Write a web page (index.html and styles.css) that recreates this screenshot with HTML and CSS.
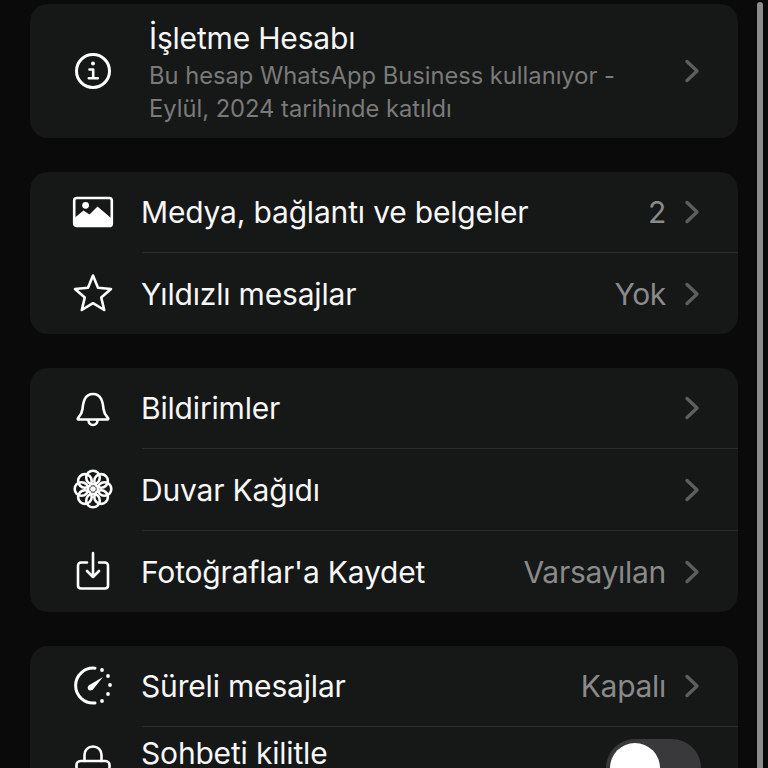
FILE: index.html
```html
<!DOCTYPE html>
<html lang="tr">
<head>
    <meta charset="UTF-8">
    <meta name="viewport" content="width=device-width, initial-scale=1.0">
    <title>Kişi bilgisi</title>
    <link rel="stylesheet" href="styles.css">
</head>
<body>
    <div class="screen">
        <div class="card">
            <div class="row row-info">
                <div class="icon-cell icon-cell-wide">
                    <svg class="icon" viewBox="0 0 40 40"><circle cx="20" cy="20" r="16.500" class="line"/><circle cx="20" cy="12.600" r="2" class="solid"/><path d="M16.500 18.500h3.700v8.500M15.800 27.200h9" class="line thin"/></svg>
                </div>
                <div class="row-body">
                    <div class="info-text">
                        <div class="title">İşletme Hesabı</div>
                        <div class="subtitle">Bu hesap WhatsApp Business kullanıyor -<br>Eylül, 2024 tarihinde katıldı</div>
                    </div>
                    <svg class="chevron" viewBox="0 0 16 24"><path d="M3 2.500l10 9.500-10 9.500"/></svg>
                </div>
            </div>
        </div>

        <div class="card">
            <div class="row">
                <div class="icon-cell">
                    <svg class="icon" viewBox="0 0 40 40"><rect x="1.200" y="6" width="37.600" height="28" rx="2.600" class="line thin"/><path d="M2 32v-6.500l8.500-7 6 4 8-8 13.500 11.500v6l-1.500 1.500h-33z" class="solid"/><circle cx="12.600" cy="13.300" r="3.400" class="solid"/></svg>
                </div>
                <div class="row-body">
                    <div class="title">Medya, bağlantı ve belgeler</div>
                    <div class="value">2</div>
                    <svg class="chevron" viewBox="0 0 16 24"><path d="M3 2.500l10 9.500-10 9.500"/></svg>
                </div>
            </div>
            <div class="row">
                <div class="icon-cell">
                    <svg class="icon" viewBox="0 0 40 40"><path d="M20 2.500l5 12.300 13 1.200-9.800 8.400 3 12.600-11.200-6.800-11.200 6.800 3-12.600-9.800-8.400 13-1.200z" class="line thin"/></svg>
                </div>
                <div class="row-body">
                    <div class="title">Yıldızlı mesajlar</div>
                    <div class="value">Yok</div>
                    <svg class="chevron" viewBox="0 0 16 24"><path d="M3 2.500l10 9.500-10 9.500"/></svg>
                </div>
            </div>
        </div>

        <div class="card">
            <div class="row">
                <div class="icon-cell">
                    <svg class="icon" viewBox="0 0 40 40"><path d="M5.500 31.500c-.8 0-1-.8-.5-1.400 2.300-2.600 4-4.300 4.500-9.100.6-6 1.800-15 10.500-15s9.900 9 10.500 15c.5 4.800 2.200 6.500 4.500 9.100.5.600.3 1.400-.5 1.400z" class="line thin"/><path d="M15.500 32c0 3.200 2 5 4.500 5s4.500-1.800 4.500-5" class="line thin"/></svg>
                </div>
                <div class="row-body">
                    <div class="title">Bildirimler</div>
                    <svg class="chevron" viewBox="0 0 16 24"><path d="M3 2.500l10 9.500-10 9.500"/></svg>
                </div>
            </div>
            <div class="row">
                <div class="icon-cell">
                    <svg class="icon" viewBox="0 0 40 40">
                        <g class="line thin">
                            <circle cx="20" cy="8.500" r="6.800"/><circle cx="28.100" cy="11.900" r="6.800"/><circle cx="31.500" cy="20" r="6.800"/><circle cx="28.100" cy="28.100" r="6.800"/>
                            <circle cx="20" cy="31.500" r="6.800"/><circle cx="11.900" cy="28.100" r="6.800"/><circle cx="8.500" cy="20" r="6.800"/><circle cx="11.900" cy="11.900" r="6.800"/>
                        </g>
                        <circle cx="20" cy="20" r="2.800" class="solid"/>
                    </svg>
                </div>
                <div class="row-body">
                    <div class="title">Duvar Kağıdı</div>
                    <svg class="chevron" viewBox="0 0 16 24"><path d="M3 2.500l10 9.500-10 9.500"/></svg>
                </div>
            </div>
            <div class="row">
                <div class="icon-cell">
                    <svg class="icon" viewBox="0 0 40 40"><path d="M14 11.500h-6c-1.800 0-3 1.200-3 3v20c0 1.800 1.200 3 3 3h24c1.800 0 3-1.200 3-3v-20c0-1.800-1.200-3-3-3h-6" class="line thin"/><path d="M20 2v24M14 20l6 6 6-6" class="line thin"/></svg>
                </div>
                <div class="row-body">
                    <div class="title">Fotoğraflar'a Kaydet</div>
                    <div class="value">Varsayılan</div>
                    <svg class="chevron" viewBox="0 0 16 24"><path d="M3 2.500l10 9.500-10 9.500"/></svg>
                </div>
            </div>
        </div>

        <div class="card">
            <div class="row">
                <div class="icon-cell">
                    <svg class="icon" viewBox="0 0 40 40"><path d="M22 2.200a17.500 17.500 0 1 0 0 34.800" class="line"/><circle cx="29" cy="4" r="1.900" class="solid"/><circle cx="35" cy="10" r="1.900" class="solid"/><circle cx="37" cy="19" r="1.900" class="solid"/><circle cx="35" cy="28" r="1.900" class="solid"/><circle cx="29" cy="35" r="1.900" class="solid"/><path d="M15.500 19.500l14.500-8.500-10.500 13z" class="solid"/><circle cx="17.300" cy="21.800" r="2.600" class="solid"/></svg>
                </div>
                <div class="row-body">
                    <div class="title">Süreli mesajlar</div>
                    <div class="value">Kapalı</div>
                    <svg class="chevron" viewBox="0 0 16 24"><path d="M3 2.500l10 9.500-10 9.500"/></svg>
                </div>
            </div>
            <div class="row row-lock">
                <div class="icon-cell">
                    <svg class="icon" viewBox="0 0 40 40"><path d="M11.500 16v-6c0-5 3.500-8.500 8.500-8.500s8.500 3.500 8.500 8.500v6" class="line thin"/><rect x="3.500" y="16" width="33" height="24" rx="4" class="line thin"/></svg>
                </div>
                <div class="row-body">
                    <div class="title">Sohbeti kilitle</div>
                    <div class="toggle"><span class="knob"></span></div>
                </div>
            </div>
        </div>

        <div class="scrollbar"></div>
    </div>
</body>
</html>
```

FILE: styles.css
```css
html, body {
    margin: 0;
    padding: 0;
    height: 100%;
    overflow: hidden;
    background-color: #0a0a0a;
}
.screen {
    position: relative;
    height: 768px;
    padding-top: 4px;
    box-sizing: border-box;
    overflow: hidden;
    font-family: Inter, "Liberation Sans", sans-serif;
    color: #f7f7f7;
}
.card {
    margin: 0 30px 34px;
    background-color: #161717;
    border-radius: 18px;
}
.row {
    display: flex;
    height: 82px;
}
.row:first-child {
    height: 80px;
}
.row-info,
.row-info:first-child {
    height: 134px;
}
.row-lock {
    height: 110px;
}
.icon-cell {
    width: 112px;
    flex: none;
    display: flex;
    align-items: center;
    box-sizing: border-box;
    padding-left: 43px;
}
.icon-cell-wide {
    width: 119px;
}
.row-lock .icon-cell {
    align-items: flex-start;
    padding-top: 19px;
}
.icon {
    width: 40px;
    height: 40px;
    overflow: visible;
}
.line {
    fill: none;
    stroke: #fff;
    stroke-width: 3;
    stroke-linecap: round;
    stroke-linejoin: round;
}
.thin {
    stroke-width: 2.600;
}
.solid {
    fill: #fff;
}
.row-body {
    flex: 1;
    min-width: 0;
    display: flex;
    align-items: center;
    padding-right: 38px;
    border-top: 1px solid #2a2b2b;
}
.row:first-child .row-body {
    border-top: none;
}
.row-lock .row-body {
    align-items: flex-start;
    padding-top: 11px;
    padding-right: 37px;
}
.title {
    font-size: 30px;
    line-height: 38px;
    letter-spacing: -0.18px;
    margin-left: -1px;
    flex: 1;
}
.row-lock .title {
    line-height: 30px;
}
.info-text {
    flex: 1;
    padding-top: 2px;
}
.info-text .title {
    margin-left: 0;
}
.subtitle {
    font-size: 23.700px;
    line-height: 33px;
    color: #7a7a7a;
    margin-top: 2px;
}
.value {
    font-size: 30px;
    color: #8a8a8a;
    letter-spacing: -0.3px;
    margin-right: 18px;
}
.chevron {
    width: 16px;
    height: 24px;
    flex: none;
}
.chevron path {
    fill: none;
    stroke: #5e5e5e;
    stroke-width: 3.400;
    stroke-linecap: round;
    stroke-linejoin: round;
}
.toggle {
    width: 95px;
    height: 58px;
    flex: none;
    margin-top: 1px;
    padding: 4px;
    box-sizing: border-box;
    border-radius: 29px;
    background-color: #39393c;
}
.knob {
    display: block;
    width: 50px;
    height: 50px;
    border-radius: 50%;
    background-color: #fff;
}
.scrollbar {
    position: absolute;
    top: 2px;
    left: 757px;
    width: 6px;
    height: 780px;
    border-radius: 3px;
    background-color: #8c8c8c;
}
```
